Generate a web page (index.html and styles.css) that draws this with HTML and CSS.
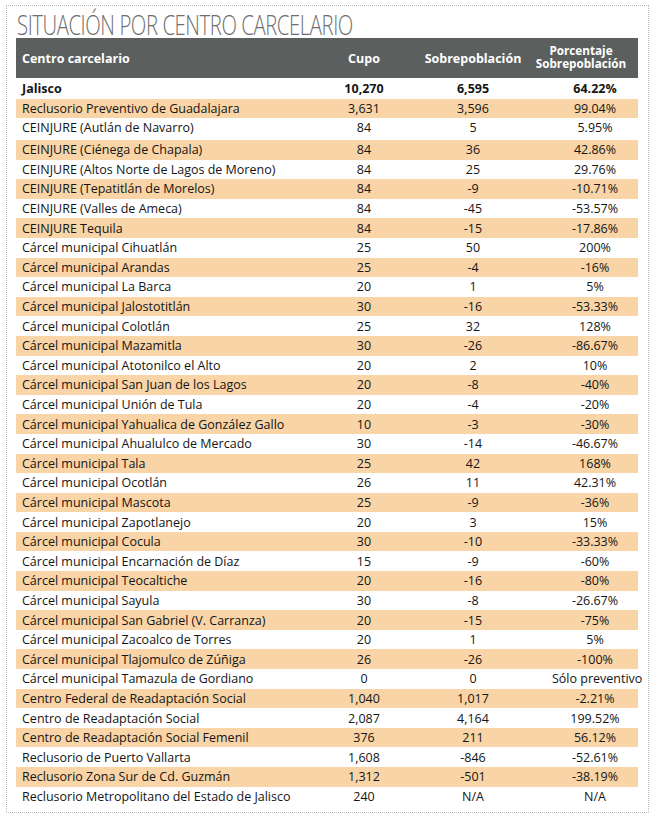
FILE: index.html
```html
<!DOCTYPE html>
<html lang="es">
<head>
<meta charset="utf-8">
<link rel="stylesheet" href="styles.css">
</head>
<body>
<div class="frame">
  <h1 class="title"><span class="title-text">SITUACIÓN POR CENTRO CARCELARIO</span></h1>
  <div class="table">
    <div class="row head">
      <div class="c name">Centro carcelario</div>
      <div class="c">Cupo</div>
      <div class="c">Sobrepoblación</div>
      <div class="c two"><span class="ln">Porcentaje</span><span class="ln">Sobrepoblación</span></div>
    </div>
    <div class="row total"><div class="c name">Jalisco</div><div class="c">10,270</div><div class="c">6,595</div><div class="c">64.22%</div></div>
    <div class="row alt first"><div class="c name">Reclusorio Preventivo de Guadalajara</div><div class="c">3,631</div><div class="c">3,596</div><div class="c">99.04%</div></div>
    <div class="row tall"><div class="c name">CEINJURE (Autlán de Navarro)</div><div class="c">84</div><div class="c">5</div><div class="c">5.95%</div></div>
    <div class="row alt"><div class="c name">CEINJURE (Ciénega de Chapala)</div><div class="c">84</div><div class="c">36</div><div class="c">42.86%</div></div>
    <div class="row"><div class="c name">CEINJURE (Altos Norte de Lagos de Moreno)</div><div class="c">84</div><div class="c">25</div><div class="c">29.76%</div></div>
    <div class="row alt"><div class="c name">CEINJURE (Tepatitlán de Morelos)</div><div class="c">84</div><div class="c">-9</div><div class="c">-10.71%</div></div>
    <div class="row"><div class="c name">CEINJURE (Valles de Ameca)</div><div class="c">84</div><div class="c">-45</div><div class="c">-53.57%</div></div>
    <div class="row alt"><div class="c name">CEINJURE Tequila</div><div class="c">84</div><div class="c">-15</div><div class="c">-17.86%</div></div>
    <div class="row"><div class="c name">Cárcel municipal Cihuatlán</div><div class="c">25</div><div class="c">50</div><div class="c">200%</div></div>
    <div class="row alt"><div class="c name">Cárcel municipal Arandas</div><div class="c">25</div><div class="c">-4</div><div class="c">-16%</div></div>
    <div class="row"><div class="c name">Cárcel municipal La Barca</div><div class="c">20</div><div class="c">1</div><div class="c">5%</div></div>
    <div class="row alt"><div class="c name">Cárcel municipal Jalostotitlán</div><div class="c">30</div><div class="c">-16</div><div class="c">-53.33%</div></div>
    <div class="row"><div class="c name">Cárcel municipal Colotlán</div><div class="c">25</div><div class="c">32</div><div class="c">128%</div></div>
    <div class="row alt"><div class="c name">Cárcel municipal Mazamitla</div><div class="c">30</div><div class="c">-26</div><div class="c">-86.67%</div></div>
    <div class="row"><div class="c name">Cárcel municipal Atotonilco el Alto</div><div class="c">20</div><div class="c">2</div><div class="c">10%</div></div>
    <div class="row alt"><div class="c name">Cárcel municipal San Juan de los Lagos</div><div class="c">20</div><div class="c">-8</div><div class="c">-40%</div></div>
    <div class="row"><div class="c name">Cárcel municipal Unión de Tula</div><div class="c">20</div><div class="c">-4</div><div class="c">-20%</div></div>
    <div class="row alt"><div class="c name">Cárcel municipal Yahualica de González Gallo</div><div class="c">10</div><div class="c">-3</div><div class="c">-30%</div></div>
    <div class="row"><div class="c name">Cárcel municipal Ahualulco de Mercado</div><div class="c">30</div><div class="c">-14</div><div class="c">-46.67%</div></div>
    <div class="row alt"><div class="c name">Cárcel municipal Tala</div><div class="c">25</div><div class="c">42</div><div class="c">168%</div></div>
    <div class="row"><div class="c name">Cárcel municipal Ocotlán</div><div class="c">26</div><div class="c">11</div><div class="c">42.31%</div></div>
    <div class="row alt"><div class="c name">Cárcel municipal Mascota</div><div class="c">25</div><div class="c">-9</div><div class="c">-36%</div></div>
    <div class="row"><div class="c name">Cárcel municipal Zapotlanejo</div><div class="c">20</div><div class="c">3</div><div class="c">15%</div></div>
    <div class="row alt"><div class="c name">Cárcel municipal Cocula</div><div class="c">30</div><div class="c">-10</div><div class="c">-33.33%</div></div>
    <div class="row"><div class="c name">Cárcel municipal Encarnación de Díaz</div><div class="c">15</div><div class="c">-9</div><div class="c">-60%</div></div>
    <div class="row alt"><div class="c name">Cárcel municipal Teocaltiche</div><div class="c">20</div><div class="c">-16</div><div class="c">-80%</div></div>
    <div class="row"><div class="c name">Cárcel municipal Sayula</div><div class="c">30</div><div class="c">-8</div><div class="c">-26.67%</div></div>
    <div class="row alt"><div class="c name">Cárcel municipal San Gabriel (V. Carranza)</div><div class="c">20</div><div class="c">-15</div><div class="c">-75%</div></div>
    <div class="row"><div class="c name">Cárcel municipal Zacoalco de Torres</div><div class="c">20</div><div class="c">1</div><div class="c">5%</div></div>
    <div class="row alt"><div class="c name">Cárcel municipal Tlajomulco de Zúñiga</div><div class="c">26</div><div class="c">-26</div><div class="c">-100%</div></div>
    <div class="row"><div class="c name">Cárcel municipal Tamazula de Gordiano</div><div class="c">0</div><div class="c">0</div><div class="c">Sólo preventivo</div></div>
    <div class="row alt"><div class="c name">Centro Federal de Readaptación Social</div><div class="c">1,040</div><div class="c">1,017</div><div class="c">-2.21%</div></div>
    <div class="row"><div class="c name">Centro de Readaptación Social</div><div class="c">2,087</div><div class="c">4,164</div><div class="c">199.52%</div></div>
    <div class="row alt"><div class="c name">Centro de Readaptación Social Femenil</div><div class="c">376</div><div class="c">211</div><div class="c">56.12%</div></div>
    <div class="row"><div class="c name">Reclusorio de Puerto Vallarta</div><div class="c">1,608</div><div class="c">-846</div><div class="c">-52.61%</div></div>
    <div class="row alt"><div class="c name">Reclusorio Zona Sur de Cd. Guzmán</div><div class="c">1,312</div><div class="c">-501</div><div class="c">-38.19%</div></div>
    <div class="row"><div class="c name">Reclusorio Metropolitano del Estado de Jalisco</div><div class="c">240</div><div class="c">N/A</div><div class="c">N/A</div></div>
  </div>
</div>
</body>
</html>
```
FILE: styles.css
```css
html, body {
  margin: 0;
  padding: 0;
  background: #ffffff;
}
body {
  padding: 5px 7px 5px 6px;
  font-family: "Open Sans", "Noto Sans", sans-serif;
  color: #151515;
}
.frame {
  width: 643px;
  height: 808px;
  border: 1px dotted #b8b8b8;
  box-sizing: border-box;
  padding: 0 0 0 9px;
}
.title {
  margin: 0;
  padding: 3px 0 0 1px;
  height: 29px;
  font-size: 28px;
  line-height: 30px;
  font-weight: 300;
  color: #6e6e6e;
  white-space: nowrap;
  overflow: visible;
}
.title-text {
  display: inline-block;
  letter-spacing: -0.6px;
  transform: scaleX(0.725);
  transform-origin: 0 50%;
}
.table {
  width: 622px;
}
.row {
  display: grid;
  grid-template-columns: 318px 60px 158px 86px;
  height: 19.6px;
  align-items: center;
  font-size: 12.5px;
  line-height: 15px;
}
.c {
  text-align: center;
  white-space: nowrap;
}
.c.name {
  text-align: left;
  padding-left: 6px;
}
.alt {
  background: #f8d4a6;
}
.head {
  height: 40px;
  background: #5b605f;
  color: #ffffff;
  font-weight: 700;
  font-size: 12.5px;
}
.head .two {
  display: flex;
  flex-direction: column;
  align-items: center;
  padding-right: 28px;
  font-size: 11.7px;
  line-height: 13px;
  padding-bottom: 2px;
}
.head .ln {
  display: block;
  height: 13px;
}
.total {
  height: 21px;
  font-weight: 700;
}
.first {
  height: 19px;
}
.tall {
  height: 22px;
  padding-bottom: 4px;
  box-sizing: border-box;
}
```
